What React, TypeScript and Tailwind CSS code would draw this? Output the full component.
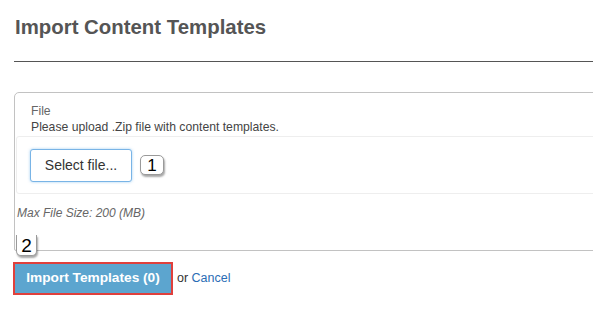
import React from 'react'

function Badge({ n, className = '' }: { n: string; className?: string }) {
  return (
    <span
      className={
        'inline-flex items-center justify-center bg-white border border-[#9a9a9a] rounded-[5px] shadow-[1px_2px_2px_rgba(0,0,0,0.35)] text-[17px] leading-none text-black ' +
        className
      }
    >
      {n}
    </span>
  )
}

export default function App() {
  return (
    <div className="w-[593px] h-[309px] overflow-hidden bg-white font-['Liberation_Sans',Arial,sans-serif]">
      <div className="pl-[14px]">
        <h1 className="pt-[13px] pl-[1px] text-[20.4px] leading-[28px] font-bold text-[#555]">Import Content Templates</h1>
        <div className="mt-[20px] h-px w-[600px] bg-[#555]" />

        {/* Upload panel */}
        <div className="relative mt-[30px] w-[620px] h-[159px] border border-[#c2c2c2] rounded-tl-[5px] rounded-bl-[2px]">
          <div className="pl-[16px] pt-[10px] text-[12.2px] leading-[16px]">
            <div className="text-[#666]">File</div>
            <div className="text-[#444]">Please upload .Zip file with content templates.</div>
          </div>
          <div className="ml-px mt-[1px] h-[58px] border border-[#eee] rounded-l-[3px] flex items-center pl-[13px] gap-[8px]">
            <button className="w-[102px] h-[33px] bg-white border border-[#79b4e6] rounded-[3px] shadow-[0_0_3px_rgba(102,175,233,0.6)] text-[14px] text-[#333]">
              Select file...
            </button>
            <Badge n="1" className="w-[24px] h-[20px] text-[16px]" />
          </div>
          <div className="pl-[2px] pt-[10px] text-[12px] italic text-[#666]">Max File Size: 200 (MB)</div>
          <Badge n="2" className="absolute left-[1px] top-[142px] w-[21px] h-[21px] rounded-t-none border-t-0 shadow-[1px_2px_2px_rgba(0,0,0,0.3)] text-[19px]" />
        </div>

        <div className="mt-[11px] flex items-center">
          <button className="ml-[-1px] w-[160px] h-[33px] border-2 border-[#e0403c] bg-[#5ca5cf] text-white font-bold text-[13.7px]">
            Import Templates (0)
          </button>
          <span className="ml-[4px] text-[12.5px] text-[#333]">
            or <span className="text-[#2a6db5]">Cancel</span>
          </span>
        </div>
      </div>
    </div>
  )
}
